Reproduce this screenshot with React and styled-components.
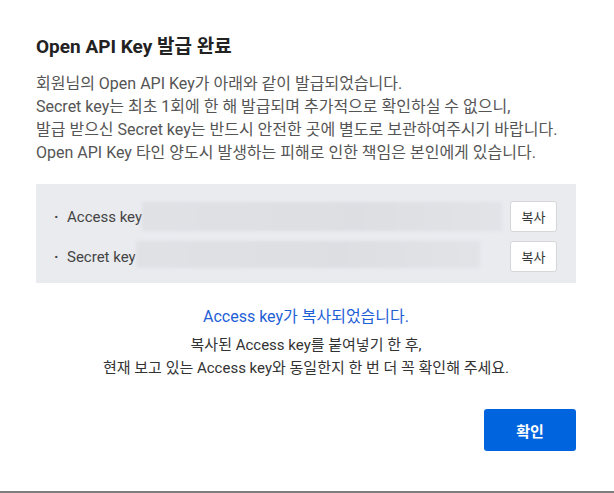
import React from 'react'
import styled, { createGlobalStyle } from 'styled-components'

const Global = createGlobalStyle`
  body {
    margin: 0;
    background: #fff;
    font-family: Roboto, "Noto Sans CJK KR", sans-serif;
  }
`

const Dialog = styled.div`
  box-sizing: border-box;
  width: 614px;
  height: 493px;
  padding: 34px 38px 0 36px;
  border-bottom: 2px solid #7d7d7d;
  background: #fff;
`

const Title = styled.h2`
  margin: 0;
  font-size: 19px;
  line-height: 26px;
  font-weight: 700;
  color: #222;
`

const Intro = styled.p`
  margin: 12px 0 0;
  font-size: 16px;
  line-height: 23px;
  color: #555;
`

const KeyBox = styled.div`
  margin-top: 20px;
  padding: 17px 19px 11px 18px;
  background: #e9ebef;
  display: flex;
  flex-direction: column;
  gap: 9px;
`

const KeyRow = styled.div`
  display: flex;
  align-items: center;
  height: 31px;
`

const Label = styled.span`
  font-size: 15px;
  color: #444;
  &::before {
    content: '·';
    display: inline-block;
    width: 13px;
    color: #444;
    font-weight: 700;
  }
`

const Masked = styled.div`
  height: ${p => p.$h}px;
  width: ${p => p.$w}px;
  background: linear-gradient(90deg, #dfe1e5, #dcdee2 60%, #e1e3e7);
  filter: blur(1.5px);
  align-self: ${p => p.$top ? 'flex-start' : 'center'};
`

const CopyButton = styled.button`
  margin-left: auto;
  width: 47px;
  height: 31px;
  border: 1px solid #d4d6da;
  border-radius: 3px;
  background: #fff;
  font-family: inherit;
  font-size: 13px;
  color: #333;
  padding: 0;
`

const Notice = styled.p`
  margin: 22px 0 0;
  text-align: center;
  font-size: 16px;
  line-height: 23px;
  color: #1f5fd6;
`

const Guide = styled.p`
  margin: 6px 0 0;
  text-align: center;
  font-size: 15px;
  line-height: 23px;
  color: #333;
`

const Footer = styled.div`
  display: flex;
  justify-content: flex-end;
  margin-top: 29px;
`

const Confirm = styled.button`
  width: 92px;
  height: 42px;
  border: none;
  border-radius: 3px;
  background: #0064de;
  color: #fff;
  font-family: inherit;
  font-size: 15px;
  font-weight: 700;
`

export default function App() {
  return (
    <>
      <Global />
      <Dialog>
        <Title>Open API Key 발급 완료</Title>
        <Intro>
          회원님의 Open API Key가 아래와 같이 발급되었습니다.<br />
          Secret key는 최초 1회에 한 해 발급되며 추가적으로 확인하실 수 없으니,<br />
          발급 받으신 Secret key는 반드시 안전한 곳에 별도로 보관하여주시기 바랍니다.<br />
          Open API Key 타인 양도시 발생하는 피해로 인한 책임은 본인에게 있습니다.
        </Intro>
        <KeyBox>
          <KeyRow>
            <Label>Access key</Label>
            <Masked $w={360} $h={29} />
            <CopyButton>복사</CopyButton>
          </KeyRow>
          <KeyRow>
            <Label>Secret key</Label>
            <Masked $w={344} $h={27} $top />
            <CopyButton>복사</CopyButton>
          </KeyRow>
        </KeyBox>
        <Notice>Access key가 복사되었습니다.</Notice>
        <Guide>
          복사된 Access key를 붙여넣기 한 후,<br />
          현재 보고 있는 Access key와 동일한지 한 번 더 꼭 확인해 주세요.
        </Guide>
        <Footer>
          <Confirm>확인</Confirm>
        </Footer>
      </Dialog>
    </>
  )
}
